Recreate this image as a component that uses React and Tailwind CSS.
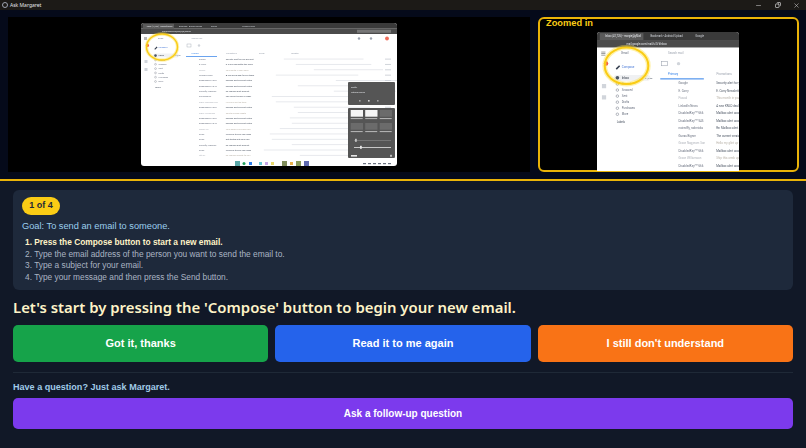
import React from 'react';
import { Minus, X, Copy } from 'lucide-react';

const rows = [
  ['Google', 'Security alert for your account', 58, 1],
  ['E. Corry', 'E. Corry Newsletter this week', 70, 1],
  ['Pascal', 'This month in your inbox', 88, 0],
  ['LinkedIn News', 'A new KNLD deal for you today', 50, 1],
  ['DisabledKey***666', 'Mailbox alert account notice', 110, 1],
  ['DisabledKey***545', 'Mailbox alert account notice', 72, 1],
  ['noiredfly, rodericks', 'Re: Mailbox alert account', 108, 1],
  ['Guess Bigner', 'The current version is ready', 46, 1],
  ['Grace Nagyeom Son', 'Hello my glint up there', 50, 0],
  ['DisabledKey***666', 'Mailbox alert account notice', 68, 1],
  ['Grace Williamson', 'Ship this week update', 72, 0],
  ['DisabledKey***666', 'Mailbox alert account notice', 64, 1],
  ['DisabledKey***545', 'Mailbox alert account notice', 66, 1],
  ['Teams Inc', 'Your weekly summary here', 54, 0],
  ['Gmail', 'Welcome to your new inbox', 44, 1],
  ['Gmail', 'Get started with your mail', 46, 1],
  ['noiredfly, rodericks', 'Re: Mailbox alert account', 66, 1],
  ['Gmail', 'Welcome to your new inbox', 38, 1],
  ['Litt Inc', 'Re: Mailbox update for you', 74, 0],
];

const labels = ['Starred', 'Snoozed', 'Sent', 'Drafts', 'Purchases', 'More'];

// the gmail capture, the two views just crop it differently
const GmailShot = ({ viewBox, className }) => (
  <svg viewBox={viewBox} className={className} preserveAspectRatio="xMinYMin slice" fontFamily="Roboto, sans-serif">
    <rect x="0" y="0" width="256" height="143" fill="#ffffff" />
    <rect x="0" y="0" width="256" height="5.7" fill="#3a3a3a" />
    <rect x="0" y="5.7" width="256" height="5.3" fill="#4b4b4b" />
    <rect x="2" y="0.8" width="31" height="4.9" fill="#5a5a5a" />
    <text x="5.7" y="3.9" fontSize="1.9" fill="#e5e7eb">Inbox (41,726) - margie@gMail</text>
    <text x="38" y="3.9" fontSize="1.9" fill="#d1d5db">Bookmark - Android Upload</text>
    <text x="70" y="3.9" fontSize="1.9" fill="#d1d5db">Google</text>
    <text x="101" y="3.9" fontSize="1.9" fill="#d1d5db">Windows News</text>
    <text x="21" y="9" fontSize="1.9" fill="#e5e7eb">mail.google.com/mail/u/0/#inbox</text>
    <rect x="216" y="6.8" width="34" height="3" fill="#777" />

    <rect x="3" y="14" width="3" height="0.5" fill="#777" />
    <rect x="3" y="15.1" width="3" height="0.5" fill="#777" />
    <rect x="3" y="16.2" width="3" height="0.5" fill="#777" />
    <text x="17" y="15.8" fontSize="2.1" fill="#6b7280">Gmail</text>
    <circle cx="6.4" cy="22.4" r="1.6" fill="#ef4444" />
    <path d="M13.3 26 l2.4 -2.4 l0.8 0.8 l-2.4 2.4 z" fill="#374151" />
    <text x="17.6" y="25.3" fontSize="2.1" fill="#4b7bd8">Compose</text>
    <rect x="12" y="30.6" width="26" height="4" rx="2" fill="#f0f1f3" />
    <circle cx="14.5" cy="32.6" r="1.3" fill="#4b5563" />
    <text x="17.6" y="33.4" fontSize="2.1" fill="#1f2937">Inbox</text>
    <text x="34" y="33.4" fontSize="1.8" fill="#4b5563">41,726</text>
    {labels.map((label, i) => (
      <g key={label}>
        <circle cx="14.5" cy={37 + i * 4.3} r="0.9" fill="none" stroke="#6b7280" strokeWidth="0.35" />
        <text x="17.6" y={37.8 + i * 4.3} fontSize="2" fill="#6b7280">{label}</text>
      </g>
    ))}
    <text x="14" y="65" fontSize="2" fill="#4b5563">Labels</text>
    <rect x="3.5" y="37" width="3" height="3" fill="#d1d5db" />
    <rect x="3.5" y="45" width="3" height="3" fill="#d1d5db" />

    <text x="50.5" y="16" fontSize="2.1" fill="#9ca3af">Search mail</text>
    <rect x="46" y="21" width="4" height="3" fill="none" stroke="#9ca3af" strokeWidth="0.4" />
    <circle cx="58" cy="22.5" r="1.2" fill="#d1d5db" />
    <rect x="45" y="33" width="31" height="0.7" fill="#2b7de9" />
    <text x="50.5" y="30.8" fontSize="2.1" fill="#2b7de9">Primary</text>
    <text x="85" y="30.8" fontSize="2.1" fill="#9ca3af">Promotions</text>
    <text x="118" y="30.8" fontSize="2.1" fill="#9ca3af">Social</text>
    <text x="150" y="30.8" fontSize="2.1" fill="#9ca3af">Updates</text>
    <circle cx="218" cy="15.5" r="1.2" fill="#9ca3af" />
    <circle cx="230" cy="15.5" r="1.2" fill="#9ca3af" />
    <circle cx="246" cy="15.5" r="1.9" fill="#ef6c5a" />

    {rows.map(([sender, subject, w, read], i) => {
      const y = 37 + i * 5.35;
      return (
        <g key={i}>
          <text x="58" y={y} fontSize="2.1" fill={read ? '#6b7280' : '#b0b4bb'}>{sender}</text>
          <text x="84.8" y={y} fontSize="2.1" fill={read ? '#4b5563' : '#b8b2a8'}>{subject}</text>
          <rect x={84.8 + w} y={y - 1.4} width={100 - w * 0.35} height="0.9" fill="#e5e7eb" />
          <rect x="244" y={y - 1.4} width="6" height="1" fill="#d1d5db" />
        </g>
      );
    })}

    {/* quick settings flyouts */}
    <rect x="207" y="59" width="47" height="23" rx="1" fill="#555555" />
    <text x="210" y="65" fontSize="2" fill="#e5e7eb">Spotify</text>
    <text x="210" y="70" fontSize="2" fill="#e5e7eb">Nothing playing</text>
    <rect x="218" y="77" width="1.6" height="1.6" fill="#a3a3a3" />
    <rect x="227" y="77" width="1.6" height="1.6" fill="#d4d4d4" />
    <rect x="236" y="77" width="1.6" height="1.6" fill="#a3a3a3" />
    <rect x="207" y="85" width="47" height="50" rx="1" fill="#555555" />
    {[0, 1, 2].map((c) => (
      <rect key={c} x={209.7 + c * 14.5} y="87" width="12.3" height="6.7" fill={c < 2 ? '#f5f5f5' : '#6b6b6b'} />
    ))}
    {[0, 1, 2].map((c) => (
      <rect key={c} x={209.7 + c * 14.5} y="100" width="12.3" height="6.7" fill="#6b6b6b" />
    ))}
    {[0, 1, 2].map((c) => (
      <g key={c}>
        <rect x={209.7 + c * 14.5} y="95" width="12" height="1.1" fill="#b0b0b0" />
        <rect x={209.7 + c * 14.5} y="108" width="12" height="1.1" fill="#b0b0b0" />
      </g>
    ))}
    <rect x="213" y="117" width="37" height="0.6" fill="#8a8a8a" />
    <rect x="214" y="115.8" width="1.8" height="3" fill="#c4c4c4" />
    <rect x="213" y="124" width="37" height="0.8" fill="#e5e5e5" />
    <rect x="219" y="122.8" width="1.8" height="3" fill="#e5e5e5" />
    <rect x="210" y="132" width="6" height="1.6" fill="#e5e5e5" />
    <rect x="249" y="131.8" width="2" height="2" fill="#bdbdbd" />

    {/* taskbar */}
    <rect x="94" y="138" width="5" height="5" fill="#5aa7a7" />
    <circle cx="103" cy="140.5" r="1.5" fill="#22a05a" />
    <rect x="108" y="139" width="3" height="3" fill="#2b7de9" />
    <rect x="118" y="139" width="3" height="3" fill="#67c7d6" />
    <rect x="124" y="139" width="3" height="3" fill="#c7a6e8" />
    <rect x="130" y="139" width="3" height="3" fill="#e8d86a" />
    <rect x="141" y="138" width="5" height="5" fill="#7f8c5a" />
    <rect x="149" y="139" width="3" height="3" fill="#e8b04a" />
    <rect x="155" y="138" width="5" height="5" fill="#8a9a5a" />
    <rect x="163" y="138" width="5" height="5" fill="#5f6ab0" />
    {[222, 227, 232, 237, 242, 247].map((x) => (
      <rect key={x} x={x} y="140" width="3" height="1.2" fill="#6b7280" />
    ))}

    <ellipse cx="21" cy="24" rx="15.5" ry="13" fill="none" stroke="#fde047" strokeOpacity="0.45" strokeWidth="3.4" />
    <ellipse cx="21" cy="24" rx="15.5" ry="13" fill="none" stroke="#facc15" strokeWidth="1.4" />
  </svg>
);

const App = () => {
  return (
    <div className="w-[806px] h-[448px] flex flex-col overflow-hidden bg-[#111827] font-['Noto_Sans',sans-serif]">
      <div className="h-[10px] shrink-0 flex items-center justify-between bg-[#1c1a17] pl-[2px] pr-[6px]">
        <div className="flex items-center gap-[2px]">
          <div className="w-[6px] h-[6px] rounded-full border border-[#9ca3af]" />
          <span className="text-[5px] leading-none text-[#e5e7eb]">Ask Margaret</span>
        </div>
        <div className="flex items-center gap-[12.5px] text-[#c4c4c4]">
          <Minus size={7} />
          <Copy size={6} strokeWidth={3} className="-scale-x-100" />
          <X size={7} />
        </div>
      </div>

      <div className="h-[171px] shrink-0 flex gap-[8px] bg-[#050a1a] pl-[8px] pr-[7px] py-[7px] border-b-2 border-[#eab308]">
        <div className="w-[522px] bg-black flex justify-center items-center">
          <GmailShot viewBox="0 0 256 143" className="w-[256px] h-[143px] rounded-[3px] blur-[0.4px]" />
        </div>
        <div className="relative flex-1 bg-black border-2 border-[#eab308] rounded-[6px] flex justify-center items-end pr-[2px]">
          <span className="absolute left-[6px] top-[-1px] font-['Liberation_Sans',sans-serif] text-[9.3px] leading-[10px] font-bold text-[#facc15]">Zoomed in</span>
          <GmailShot viewBox="0 0 101 99" className="w-[142px] h-[139px] mb-[-1px] rounded-t-[3px] blur-[0.4px]" />
        </div>
      </div>

      <div className="flex-1 flex flex-col px-[13px] pt-[9px]">
        <div className="h-[100px] bg-[#1e293b] rounded-[6px] pl-[9px] pt-[7px] font-['Liberation_Sans',sans-serif]">
          <div className="flex">
            <span className="flex items-center justify-center w-[38px] h-[18px] rounded-full bg-[#facc15] text-[#1f2937] text-[9px] font-bold">1 of 4</span>
          </div>
          <p className="mt-[3px] text-[9.25px] leading-[16px] text-[#9ccfee]">Goal: To send an email to someone.</p>
          <ol className="mt-[3px] pl-[3px] text-[8.35px] leading-[11.7px] text-[#aab4c3]">
            <li className="font-bold text-[#fef3c7]">1. Press the Compose button to start a new email.</li>
            <li>2. Type the email address of the person you want to send the email to.</li>
            <li>3. Type a subject for your email.</li>
            <li>4. Type your message and then press the Send button.</li>
          </ol>
        </div>
        <h1 className="mt-[7px] text-[14.9px] leading-[21px] font-semibold text-[#fef3c7]">Let's start by pressing the 'Compose' button to begin your new email.</h1>
        <div className="mt-[7px] grid grid-cols-3 gap-[7px] font-['Liberation_Sans',sans-serif] font-bold text-[11px] text-white">
          <button className="h-[37px] rounded-[5px] bg-[#16a34a]">Got it, thanks</button>
          <button className="h-[37px] rounded-[5px] bg-[#2563eb]">Read it to me again</button>
          <button className="h-[37px] rounded-[5px] bg-[#f97316]">I still don't understand</button>
        </div>
        <div className="mt-[10px] h-px bg-[#1f2937]" />
        <p className="mt-[8px] font-['Liberation_Sans',sans-serif] text-[9.05px] leading-[13px] font-bold text-[#a0cbe8]">Have a question? Just ask Margaret.</p>
        <button className="mt-[4px] h-[31px] rounded-[5px] bg-[#7c3aed] font-['Liberation_Sans',sans-serif] font-bold text-[10px] text-white">Ask a follow-up question</button>
      </div>
    </div>
  );
};

export default App;
